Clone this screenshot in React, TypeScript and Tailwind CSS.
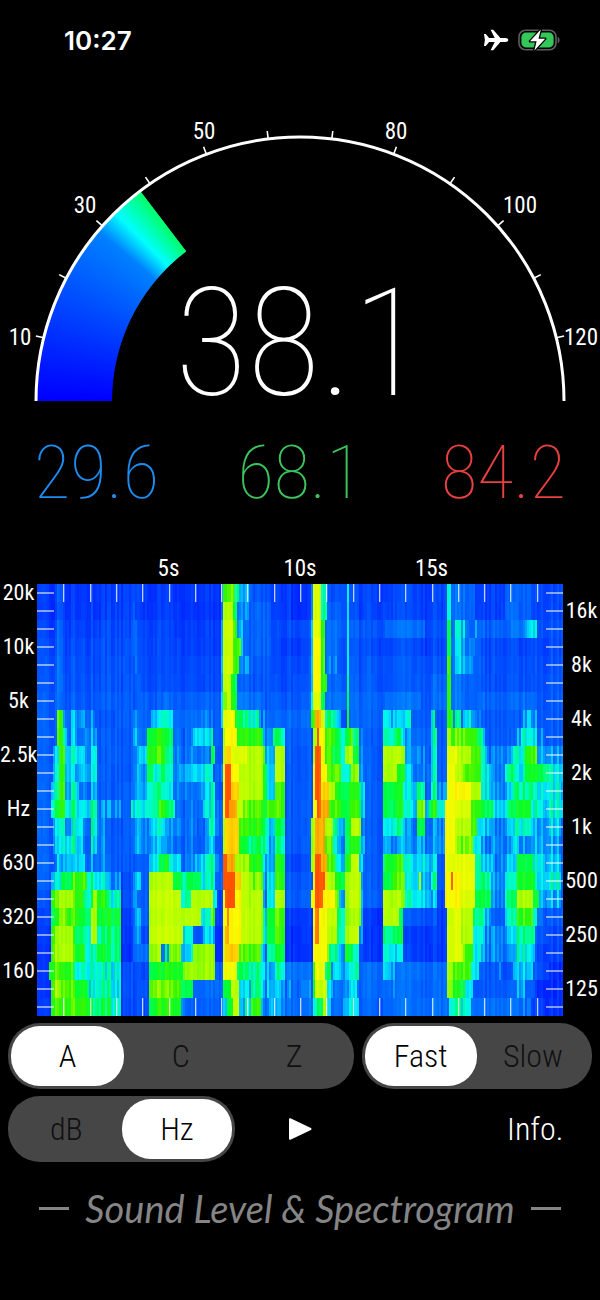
import { useMemo } from 'react';

type RGB = [number, number, number];

const PALETTE: RGB[] = [
  [0, 16, 255], [0, 50, 255], [0, 90, 255], [0, 128, 255], [0, 190, 255], [0, 245, 245], [0, 255, 150],
  [0, 255, 50], [60, 245, 0], [180, 255, 0], [255, 250, 0], [255, 170, 0], [255, 80, 0],
];

function mix(a: RGB, b: RGB, t: number): string {
  return `rgb(${a.map((v, i) => Math.round(v + (b[i] - v) * t)).join(',')})`;
}

function heat(level: number): string {
  const v = Math.max(0, Math.min(PALETTE.length - 1.001, level));
  const i = Math.floor(v);
  return mix(PALETTE[i], PALETTE[i + 1], v - i);
}

// One line per frequency band, high to low; each entry is "start:level".
const BANDS = [
  '37:.8 57:1.8 63:1 132:1.6 135:.9 220:3 223:8 235:6 238:3 250:1.6 270:1 290:.6 310:4 313:9.5 321:6 326:1.6 347:6 349:1.2 447:6 450:2.6 465:2 475:1.1 505:2 530:1.3',
  '37:.8 57:1.8 63:1 132:2 135:.9 220:3 223:9 233:7 236:3 250:2 270:1 290:.6 310:4 313:9.5 321:6 326:1.8 347:6 349:1.2 447:6 450:2.6 465:2 475:1.1 505:2 530:1.3',
  '37:1.1 57:2.2 63:1.3 132:2.6 137:1.2 220:4 223:9.3 233:8 237:3.5 243:2 270:1.3 310:5 313:9.7 321:8 325:2.6 337:2 347:6 349:1.6 384:2.2 424:1.4 447:7 451:3 455:4.6 465:3 468:2 474:4.6 477:2 505:2 511:2.4 525:4.4 537:1.6',
  '37:1.2 57:2.3 63:1.4 132:2.6 137:1.2 220:4 223:9.3 233:8 240:3 243:2 270:1.1 310:5 313:10 321:8 325:2.6 337:1.8 347:6 349:1.4 424:1.2 447:7 451:3.4 457:4.6 463:3 475:2 480:1.3',
  '37:1.4 57:2.4 63:1.5 132:2.8 137:1.4 220:4 223:9.3 233:8 239:2.8 250:1.8 270:1.4 310:5 313:10 321:8 325:3 337:1.6 347:6 349:1.6 447:8.6 451:3.4 457:4.6 463:3.4 472:2 480:1.5',
  '37:1.5 57:2.4 63:1.6 137:1.5 220:4 223:9.2 231:7 236:1.7 270:1.5 310:5 313:10 321:8 326:2 347:7 349:1.7 430:2 447:8 451:2.4 461:3.4 463:1.9 480:1.6',
  '37:1.7 57:2.4 63:1.8 162:2.6 167:2 220:5 223:8.6 227:9.2 231:7.4 236:2.4 262:1.8 310:6 313:9.6 321:7 325:2.4 347:7 349:1.9 384:2.4 420:1.8 430:2.2 447:8 451:2.4 461:3.4 463:2 520:2.3 535:1.8',
  '37:2 57:8 62:3 66:2.5 70:3.4 95:2 133:3.5 136:2.3 150:4.4 160:6 165:4.5 173:2.5 200:3 212:2.3 220:5 223:9.7 235:8 237:6 243:5.4 259:3 264:2.3 311:8 315:11 320:9.5 325:6.5 335:4 341:2 347:8 349:2.2 383:5 390:4.2 400:3 404:4.6 411:2.2 430:5 435:2 447:8 452:3.6 455:5.4 461:3.4 465:5 470:3 480:2 520:3.6 526:5 530:3 536:2',
  '37:2 57:8 62:5 66:2.5 70:4.2 76:2.6 84:4 97:2 133:4 137:2.5 147:7.5 165:6 173:3 192:5 200:4.6 210:6 213:2.3 222:9 224:10 236:7.5 263:3 273:6 285:2 312:9 316:12 319:10 325:8 335:6 344:7.5 352:5 358:3 362:2 383:6 400:4 403:3 411:2.5 430:5 436:2 447:9 451:8 476:6 483:3 486:2 517:3.6 521:6 525:4.8 536:3 545:2',
  '37:2 53:4 58:8 64:5 83:4 92:6 97:2 133:3 138:4 147:8 165:5.5 173:3 195:3 210:7 214:2 222:9 224:10.5 231:9.5 246:9 262:8 265:4 274:9 285:2 312:9 315:12 320:10 325:8 332:6 344:9 352:6 359:4 362:2 383:9 400:8 404:3 430:5 436:2 447:9.7 457:9 470:8 480:5 486:3 513:5 525:8 536:4 548:3',
  '37:2 52:5 58:8 64:5 72:4 92:5.5 97:2 133:3.5 147:7 152:5 160:7 165:5 173:3 178:4 192:5 213:3 222:10 224:12 231:10 238:9 262:7 266:4 274:9 285:2 312:10 314:12 321:10 327:8 340:6 350:8 359:4 363:2 383:9 397:7 405:4 410:3 430:5 436:2 446:10 455:9 462:8 480:5 490:3 505:6 515:5 525:7 548:5 560:4',
  '37:2 50:5 58:8 64:4 70:5 78:3 92:4 97:2 133:3.5 147:6 165:4.5 173:3 200:4 210:6 214:2 222:10 224:12 231:10.5 238:9 262:7 266:4 274:8 285:2 312:10 314:12 321:10.5 328:9 335:7 360:4 364:2 383:7 403:4 417:6 424:3 430:5.5 436:3 446:10 470:9 480:5 490:3 505:4 513:6 530:6 535:5 560:3',
  '37:2 50:6 58:8 65:6 76:5 90:6 96:3 120:2 131:4.5 147:6 159:8 165:6 175:3 203:5 210:6 214:3 222:10 224:12 228:11 237:9 243:8 262:7 266:8 285:2 312:10 316:12 321:11 328:8 340:7.5 360:4 364:2 383:7 402:4.5 417:8.5 424:4 429:7.5 436:5 445:10 455:9.5 470:8 480:7 492:4.5 505:6 517:7.5 530:5 535:6 541:5 560:4',
  '37:2 52:4 58:6 65:4 72:5.5 83:3 91:5.5 96:3 107:2 133:3 148:5 165:3 208:6 214:3 222:9 224:10.5 238:7.5 262:6 266:4.5 274:7 285:2 311:9 315:11 325:9 333:6 336:4 344:7 351:9 360:3 364:2 383:5.5 400:4 402:3 417:7 424:3 436:3 445:10 455:9 470:8 477:4.5 490:3 505:4 515:5.5 530:4 560:2',
  '37:2 52:3.5 59:5.5 75:5 83:3 90:5 96:3 107:2 133:3 148:4 165:2.8 208:4.5 214:2 222:9 224:10.5 238:6.5 262:6 266:4 274:6 285:2 311:9 315:11 325:8.5 333:5 336:3.5 344:7 360:4 364:2 383:4 390:3 417:4 424:3 445:10 455:8.5 472:5 480:3 505:3 512:5 517:3.5 560:2',
  '37:2 57:4 65:5 70:3 75:5 84:3 107:2 148:5 158:7 168:5 180:3 195:4.5 200:5 208:6 214:3 222:10 223:12 226:11 235:9 238:8.5 250:7.5 263:4 274:7.5 285:1.5 311:9 315:12 320:11 326:8 335:4.5 344:8 350:9 358:5 363:2 383:6 385:7.5 402:4.5 418:5 424:3 425:4.5 437:2 445:9.7 455:9.6 474:6 480:4 492:3 505:4 516:7 533:5 545:4 560:2',
  '37:2 51:5 60:7 73:8 86:6 95:5 107:3 120:1.5 133:3.5 140:2 148:9 173:7 183:6 187:7 200:5 210:6 214:2.5 222:10 223:12 234:10.5 240:9 250:8.6 262:3 266:5 274:8 284:2 312:10 315:12 324:10.5 327:9 335:7 344:9 360:4 362:2 383:7 390:8 404:4.5 418:9 421:4 430:6 437:2 445:10 450:12 452:10 460:9.8 475:6 490:3 505:5 516:7.5 534:5 560:2',
  '37:1.5 50:8 58:9 72:8 83:6 93:9 97:7.5 107:5.5 120:1.5 132:4 136:2 148:9.2 180:6 190:9 213:6 216:1.5 222:10 224:12 235:10 240:9 262:3 266:5 274:9 285:2 311:10 315:12 322:10 335:8 338:4 344:9 360:4 362:2 383:9 400:8 404:5 430:4 437:1.5 445:10 460:9.5 475:7 490:3 505:6 516:9 533:7 538:4 560:2',
  '37:1.2 50:7 58:8.5 66:8 78:7 90:9 96:7 107:7 120:1.2 133:3 140:2 148:9.1 200:5 210:8 214:1.5 222:10 226:11.5 229:10 240:9 262:5 266:7 274:8 284:1.2 312:10 315:11.5 319:10 326:9.2 336:6 344:8.8 360:4 362:1 383:9 398:6 403:2 437:1.2 447:9.5 460:9 473:6 482:4 490:2 505:5 516:8 533:5 536:3 548:2',
  '37:1 50:8.5 58:9 72:7 82:6 90:9 97:6 107:6 120:1 133:3 140:1.5 148:9.2 183:5.5 192:2 203:4.5 214:1 222:9.5 225:11 229:10 240:9 262:5 266:7 274:8 284:1 312:10 315:11.5 319:10 326:9 336:6 344:9 359:4 362:1 383:6.5 402:1.2 447:9.5 460:9 473:5 482:3 505:4 516:6.5 535:2 548:1.5',
  '37:.8 51:8.5 58:9 73:7.5 85:6 97:7 107:6 120:.8 133:2.5 148:8.8 160:3 164:6 167:3 168:8.5 180:5 192:8.8 214:1 222:9.5 225:10.5 238:8 260:6 263:3 266:6 275:7 284:1 312:10 326:8.5 328:6 336:4 344:8 348:6 352:4.5 358:2 362:1 383:5.5 394:4.5 403:1.2 447:9.5 463:8 473:5 480:3 505:3 517:5.5 530:4 535:1.5',
  '37:.8 49:8 73:5.5 105:5 120:1.6 148:7 165:7.5 182:8.8 214:2.2 222:9.7 237:6 262:4 275:5.5 284:2.6 312:8 315:9.8 324:6.5 330:4 344:5 358:2.4 383:5 390:4 395:2.4 447:9 452:8 470:5 478:2 498:4 500:1.8 512:4 518:4.5 533:1.8 548:.8',
  '37:.8 50:8.5 73:7.5 88:5.5 112:4.5 120:1.6 148:8.5 180:7 192:3 195:2.5 222:7 230:9 238:4 250:6 262:3 266:4 275:4 284:2.8 313:7 315:9.3 326:4.5 333:2.6 343:4 357:2.4 388:3 395:2.4 447:8.8 452:7 465:5 472:2 517:4 525:2 535:.8',
  '37:1 50:8 90:6.5 110:5.5 120:1.6 148:7.5 180:4 185:2.3 222:4 226:7 232:9.3 238:3.5 244:5 250:8 260:5 262:2.5 268:4 275:3.5 284:2.5 313:5 316:7 322:9 327:4 330:2.5 343:5 352:4 358:2.2 383:2.5 448:6 460:5 470:2.5 520:3 530:1.5 545:1',
];

const X0 = 37;
const CHART_W = 526;
const ROW_H = 18;
const CHART_H = BANDS.length * ROW_H;

function hash(a: number, b: number): number {
  const s = Math.sin(a * 127.1 + b * 311.7) * 43758.5453;
  return s - Math.floor(s) - 0.5;
}

function cells() {
  const out: { x: number; y: number; w: number; fill: string }[] = [];
  BANDS.forEach((line, row) => {
    const segs = line.split(' ').map((s) => s.split(':').map(Number));
    let k = 0;
    for (let x = 0; x < CHART_W; x += 2) {
      while (k + 1 < segs.length && segs[k + 1][0] - X0 <= x) k += 1;
      const raw = segs[k][1];
      const base = row < 7 && raw < 2.6 ? raw + 0.25 : raw;
      const spread = base < 2.8 ? 1 : base < 6.6 ? 2.6 : base < 8.7 ? 1.5 : 0.5;
      const streak = 0.85 * hash(x, 1) + 0.25 * hash(x, row + 7) + 0.25 * hash(Math.floor(x / 8), row + 3);
      out.push({ x, y: row * ROW_H, w: 2, fill: heat(base + spread * streak) });
    }
  });
  return out;
}

function Spectrogram() {
  const data = useMemo(cells, []);
  const seconds = Array.from({ length: 19 }, (_, i) => Math.round((i + 1) * 26.3));
  return (
    <svg viewBox={`0 0 ${CHART_W} ${CHART_H}`} preserveAspectRatio="none" className="block h-[432px] w-full" role="img" aria-label="Spectrogram">
      <g shapeRendering="crispEdges">
        {data.map((c) => (
          <rect key={`${c.x}-${c.y}`} x={c.x} y={c.y} width={c.w} height={ROW_H} fill={c.fill} />
        ))}
      </g>
      <g fill="#fff" fillOpacity="0.75">
        {seconds.map((x) => (
          <g key={x}>
            <rect x={x} y="0" width="1.3" height="18" />
            <rect x={x} y="414" width="1.3" height="18" />
          </g>
        ))}
        {BANDS.map((_, i) => (
          <g key={i}>
            <rect x="0" y={i * ROW_H + 8.3} width="17" height="1.4" />
            <rect x="509" y={i * ROW_H + 8.3} width="17" height="1.4" />
          </g>
        ))}
      </g>
    </svg>
  );
}

const CX = 300;
const CY = 321;

function polar(r: number, deg: number) {
  const a = (deg * Math.PI) / 180;
  return `${(CX - r * Math.cos(a)).toFixed(2)} ${(CY - r * Math.sin(a)).toFixed(2)}`;
}

const STOPS: [number, RGB][] = [
  [0, [0, 0, 255]],
  [28.8, [0, 128, 255]],
  [32.8, [0, 255, 255]],
  [38.1, [0, 255, 100]],
];

function gaugeColor(db: number): string {
  for (let i = 1; i < STOPS.length; i += 1) {
    if (db <= STOPS[i][0]) {
      return mix(STOPS[i - 1][1], STOPS[i][1], (db - STOPS[i - 1][0]) / (STOPS[i][0] - STOPS[i - 1][0]));
    }
  }
  return mix(STOPS[3][1], STOPS[3][1], 0);
}

const LEVEL = 38.1;
const DEG_PER_DB = 180 / 130;
const SLICES = 127;

const GAUGE_LABELS = [
  { t: '10', x: 20, y: 265 },
  { t: '30', x: 85, y: 133 },
  { t: '50', x: 204, y: 59 },
  { t: '80', x: 396, y: 59 },
  { t: '100', x: 520, y: 133 },
  { t: '120', x: 581, y: 265 },
];

function Gauge() {
  return (
    <div className="grid">
      <svg viewBox="0 0 600 322" className="col-start-1 row-start-1 block w-full" aria-label="Sound level gauge" role="img">
        {Array.from({ length: SLICES }, (_, i) => {
          const db = (i * LEVEL) / SLICES;
          const a = db * DEG_PER_DB;
          const b = Math.min(LEVEL, db + (1.8 * LEVEL) / SLICES) * DEG_PER_DB;
          return (
            <path
              key={i}
              d={`M${polar(263, a)}A263 263 0 0 1 ${polar(263, b)}L${polar(188, b)}A188 188 0 0 0 ${polar(188, a)}Z`}
              fill={gaugeColor(db)}
            />
          );
        })}
        <path d={`M${polar(264, 0)}A264 264 0 0 1 ${polar(264, 180)}`} fill="none" stroke="#fff" strokeWidth="3" />
        {Array.from({ length: 12 }, (_, i) => (
          <path key={i} d={`M${polar(264, (i + 1) * 10 * DEG_PER_DB)}L${polar(272, (i + 1) * 10 * DEG_PER_DB)}`} stroke="#fff" strokeWidth="1.6" />
        ))}
        {GAUGE_LABELS.map((l) => (
          <text key={l.t} x={l.x} y={l.y} textAnchor="middle" className="fill-white text-[23px] font-normal">
            {l.t}
          </text>
        ))}
      </svg>
      <output className="col-start-1 row-start-1 self-end justify-self-center text-[150px] leading-[116px] font-thin">38.1</output>
    </div>
  );
}

function Segmented({ name, options, selected }: { name: string; options: string[]; selected: string }) {
  return (
    <div role="radiogroup" aria-label={name} className="flex h-[66px] min-w-0 rounded-[32px] bg-[#464646] p-[3px]">
      {options.map((o) => (
        <label
          key={o}
          className="relative flex flex-1 cursor-pointer items-center justify-center rounded-[29px] text-[32px] font-light text-[#111] has-checked:bg-white has-checked:text-black"
        >
          <input type="radio" name={name} value={o} defaultChecked={o === selected} className="absolute inset-0 cursor-pointer appearance-none" />
          {o}
        </label>
      ))}
    </div>
  );
}

function StatusBar() {
  return (
    <header className="flex h-20 items-center justify-between pr-10 pl-16">
      <time className="font-['Inter',sans-serif] text-[26px] font-semibold">10:27</time>
      <div className="flex items-center gap-[9px]">
        <svg viewBox="0 0 26 24" className="h-6 w-[26px]" fill="#fff" aria-label="Airplane mode">
          <path d="M1 6h1.8l3.3 4h5.6L7.6 1.8h2.6L17.4 10h4.9c1.7 0 3 .8 3 2s-1.3 2-3 2h-4.9l-7.2 8.2H7.6l4.1-8.2H6.1l-3.3 4H1l.9-6z" />
        </svg>
        <svg viewBox="0 0 42 22" className="h-[22px] w-[42px]" aria-label="Battery charging">
          <rect x="1" y="1.2" width="37" height="19.6" rx="6.5" fill="none" stroke="#5d5d5f" strokeWidth="1.6" />
          <rect x="3.4" y="3.6" width="32.2" height="14.8" rx="4.4" fill="#34c759" />
          <path d="M39.6 7.8c1.3.5 2 1.7 2 3.2s-.7 2.7-2 3.2z" fill="#5d5d5f" />
          <path d="M22.8.6 12 12.3h6.6L16.4 21.4 27.2 9.7h-6.7z" fill="#fff" stroke="#000" strokeWidth="2.6" strokeLinejoin="round" paintOrder="stroke" />
        </svg>
      </div>
    </header>
  );
}

function AxisLabels({ labels, className }: { labels: string[]; className: string }) {
  return (
    <ul className={className}>
      {labels.map((l) => (
        <li key={l} className="h-[54px] last:h-[18px]">{l}</li>
      ))}
    </ul>
  );
}

export default function App() {
  return (
    <main className="flex min-h-screen flex-col bg-black font-['Roboto_Condensed',sans-serif] text-white">
      <StatusBar />
      <Gauge />
      <section className="mt-[30px] flex justify-between px-[34px] text-[75px] leading-[80px] font-thin" aria-label="Minimum, average and maximum">
        <output className="text-[#1d8cf0]">29.6</output>
        <output className="text-[#3cc45c]">68.1</output>
        <output className="text-[#ea4040]">84.2</output>
      </section>
      <section className="mt-[45px]">
        <div className="mb-[3px] flex justify-center px-[37px] text-center text-[23px] leading-6">
          <span className="w-1/4">5s</span>
          <span className="w-1/4">10s</span>
          <span className="w-1/4">15s</span>
        </div>
        <div className="flex">
          <AxisLabels
            labels={['20k', '10k', '5k', '2.5k', 'Hz', '630', '320', '160']}
            className="w-[37px] shrink-0 text-center text-[22px] leading-[18px]"
          />
          <div className="min-w-0 flex-1">
            <Spectrogram />
          </div>
          <AxisLabels
            labels={['16k', '8k', '4k', '2k', '1k', '500', '250', '125']}
            className="w-[37px] shrink-0 pt-[18px] text-center text-[22px] leading-[18px]"
          />
        </div>
      </section>
      <section className="mt-[7px] flex flex-col gap-[7px] px-2">
        <div className="grid grid-cols-[3fr_2fr] gap-2">
          <Segmented name="Weighting" options={['A', 'C', 'Z']} selected="A" />
          <Segmented name="Response" options={['Fast', 'Slow']} selected="Fast" />
        </div>
        <div className="grid grid-cols-[2fr_1fr_2fr] gap-2">
          <Segmented name="Display" options={['dB', 'Hz']} selected="Hz" />
          <button type="button" aria-label="Play" className="flex items-center justify-center">
            <svg viewBox="0 0 24 24" className="size-6" fill="#fff" stroke="#fff" strokeWidth="2" strokeLinejoin="round">
              <path d="M2 2.2v19.6L22.5 12z" />
            </svg>
          </button>
          <div className="flex justify-end">
            <button type="button" className="w-1/2 text-[32px] font-light">Info.</button>
          </div>
        </div>
      </section>
      <footer className="mt-5 flex items-center justify-center gap-4 text-[#858585]">
        <span className="h-[3px] w-[30px] bg-current" />
        <h1 className="font-['Lato',sans-serif] text-[38px] leading-[52px] italic">Sound Level &amp; Spectrogram</h1>
        <span className="h-[3px] w-[30px] bg-current" />
      </footer>
    </main>
  );
}
